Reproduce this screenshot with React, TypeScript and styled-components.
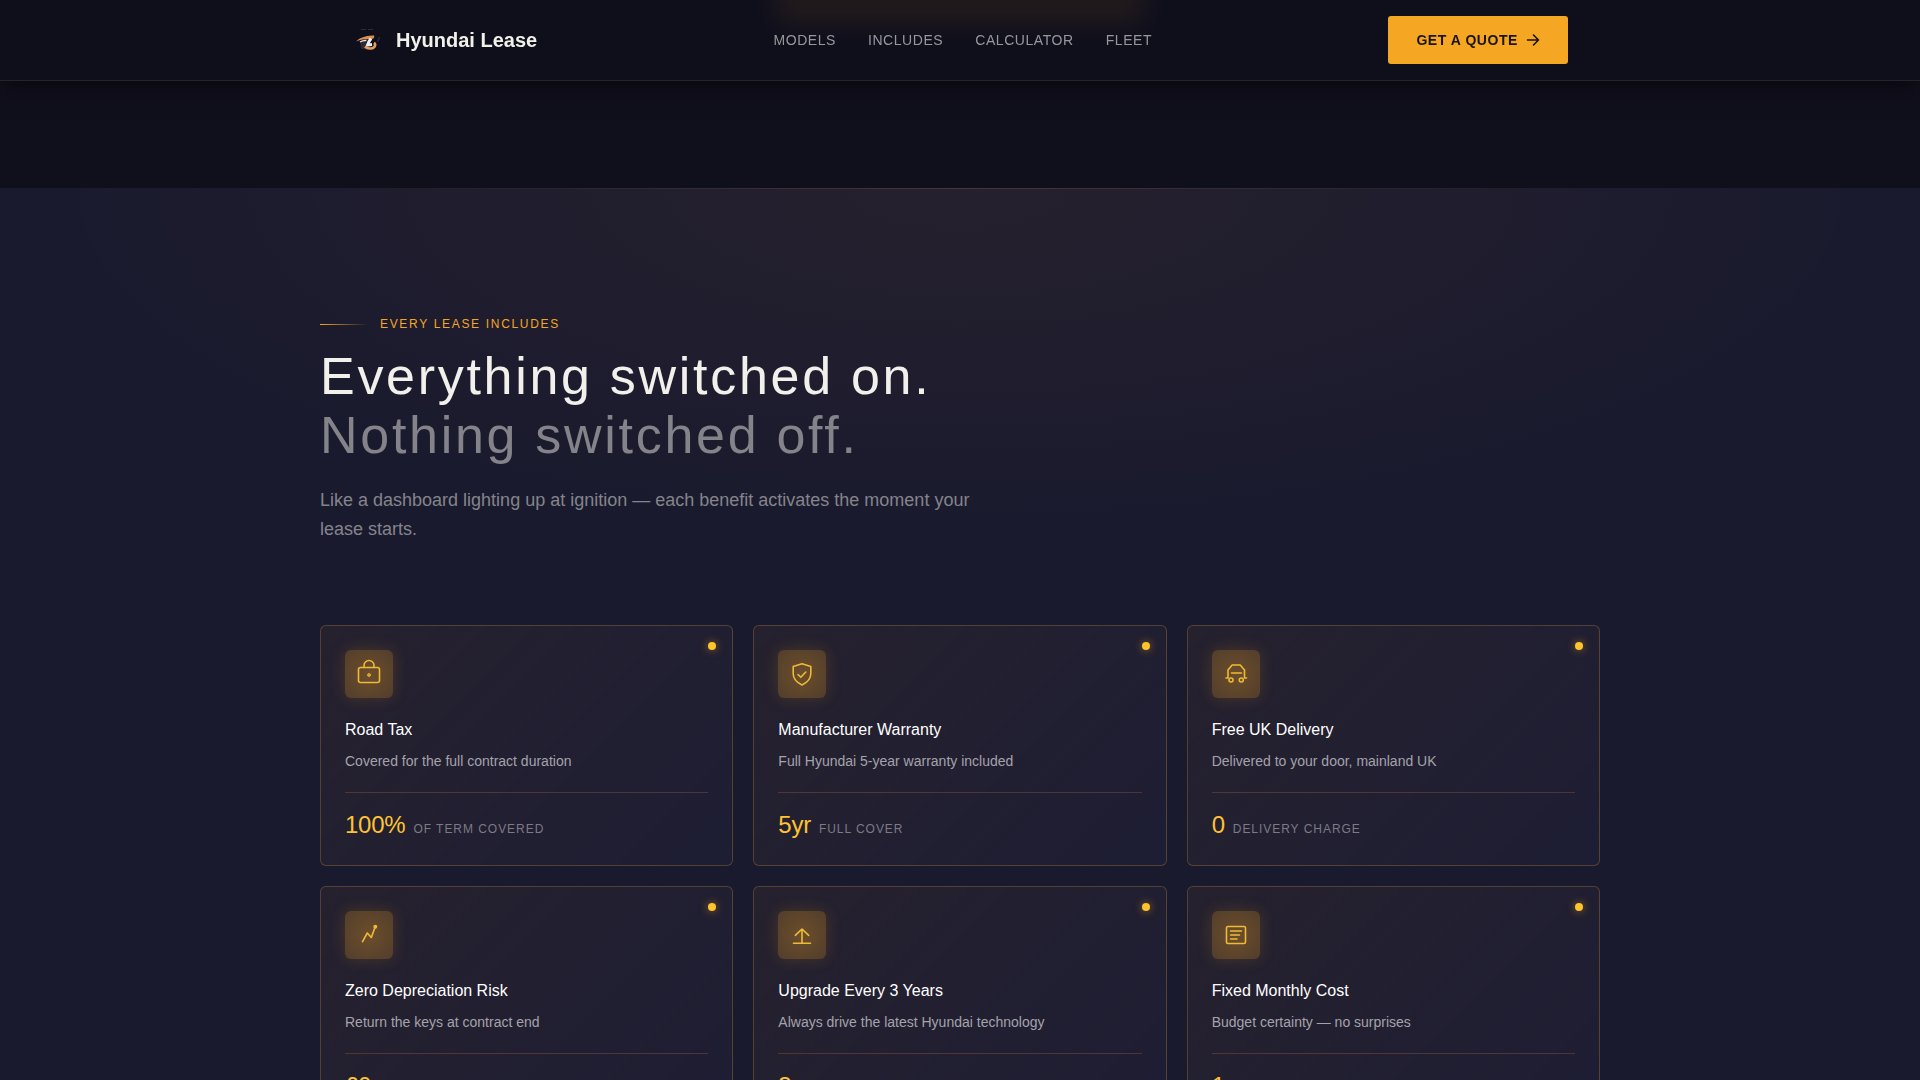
import React from "react";
import styled, { createGlobalStyle } from "styled-components";

const GlobalStyle = createGlobalStyle`
  *, *::before, *::after { box-sizing: border-box; }
  html { background: #1a1a2e; }
  body {
    margin: 0;
    height: 100vh;
    overflow: hidden;
    background: #1a1a2e;
    color: #f2f0eb;
    font-family: "Liberation Sans", Arial, sans-serif;
    -webkit-font-smoothing: antialiased;
  }
  h1, h2, h3, p, ul { margin: 0; padding: 0; }
`;

const Header = styled.header`
  position: sticky;
  top: 0;
  z-index: 10;
  border-bottom: 1px solid #24232e;
  background: #0f0f1c;
  box-shadow: 0 4px 24px rgba(0, 0, 0, 0.5);
`;

const HeaderGlow = styled.div`
  position: absolute;
  inset: 0;
  overflow: hidden;
  pointer-events: none;

  &::before {
    content: "";
    position: absolute;
    top: -40px;
    left: 50%;
    width: 368px;
    height: 64px;
    margin-left: -184px;
    background: rgba(245, 150, 35, 0.08);
    filter: blur(12px);
  }
`;

const HeaderInner = styled.div`
  position: relative;
  display: flex;
  align-items: center;
  justify-content: space-between;
  max-width: 1280px;
  margin: 0 auto;
  padding: 16px 32px;
`;

const Brand = styled.a`
  display: flex;
  align-items: center;
  gap: 12px;
  color: #f2f0eb;
  font-size: 20px;
  font-weight: 700;
  line-height: 28px;
  text-decoration: none;
`;

const Nav = styled.nav`
  display: flex;
  gap: 32px;
`;

const NavLink = styled.a`
  color: #98979b;
  font-size: 14px;
  line-height: 20px;
  letter-spacing: 0.04em;
  text-transform: uppercase;
  text-decoration: none;
`;

const QuoteButton = styled.button`
  display: flex;
  align-items: center;
  gap: 8px;
  height: 48px;
  padding: 0 28px;
  border: 0;
  border-radius: 3px;
  background: #f5a623;
  color: #1a1408;
  font: 700 14px/20px "Liberation Sans", Arial, sans-serif;
  letter-spacing: 0.04em;
  text-transform: uppercase;
  cursor: pointer;
`;

const HeroTail = styled.div`
  height: 107px;
  background: #100f1c;
`;

const Section = styled.section`
  padding: 128px 32px;
  background:
    linear-gradient(90deg, transparent 20%, rgba(245, 166, 100, 0.16) 50%, transparent 80%) top / 100% 1px no-repeat,
    radial-gradient(ellipse 48% 340px at 50% 0, rgba(245, 150, 35, 0.05), transparent),
    #1a1a2e;
`;

const Container = styled.div`
  max-width: 1280px;
  margin: 0 auto;
`;

const Eyebrow = styled.p`
  display: flex;
  align-items: center;
  gap: 12px;
  color: #f5a623;
  font-size: 12px;
  line-height: 16px;
  letter-spacing: 0.14em;
  text-transform: uppercase;

  &::before {
    content: "";
    width: 48px;
    height: 1px;
    background: linear-gradient(90deg, #f5a623, transparent);
  }
`;

const Heading = styled.h2`
  margin-top: 15px;
  font-size: 52px;
  font-weight: 400;
  line-height: 59px;
  letter-spacing: 0.052em;
`;

const Muted = styled.span`
  display: block;
  color: #838389;
`;

const Lead = styled.p`
  max-width: 672px;
  margin-top: 21px;
  color: #84848b;
  font-size: 18px;
  line-height: 29px;
`;

const Grid = styled.ul`
  display: grid;
  grid-template-columns: repeat(3, 1fr);
  gap: 20px;
  margin-top: 81px;
  list-style: none;
`;

const Card = styled.li`
  position: relative;
  padding: 24px;
  border: 1px solid rgba(245, 166, 60, 0.25);
  border-radius: 6px;
  background: linear-gradient(135deg, rgba(245, 160, 50, 0.055), rgba(32, 32, 56, 0.6));
`;

const StatusDot = styled.span`
  position: absolute;
  top: 16px;
  right: 16px;
  width: 8px;
  height: 8px;
  border-radius: 50%;
  background: #ffc32b;
  box-shadow: 0 0 8px rgba(245, 166, 35, 0.6);
`;

const IconTile = styled.div`
  display: grid;
  place-items: center;
  width: 48px;
  height: 48px;
  margin-bottom: 20px;
  border-radius: 6px;
  background: radial-gradient(circle, rgba(245, 166, 35, 0.34), rgba(245, 166, 35, 0.22));
  box-shadow: 0 0 16px rgba(245, 166, 35, 0.18);
  color: #efba35;
`;

const CardTitle = styled.h3`
  color: #fff;
  font-size: 16px;
  font-weight: 400;
  line-height: 24px;
`;

const CardText = styled.p`
  margin-top: 8px;
  color: #a4a3ab;
  font-size: 14px;
  line-height: 22px;
`;

const Stat = styled.p`
  display: flex;
  align-items: baseline;
  gap: 8px;
  margin-top: 20px;
  padding-top: 16px;
  border-top: 1px solid rgba(225, 120, 60, 0.26);
`;

const StatValue = styled.span`
  color: #ffc233;
  font-size: 24px;
  line-height: 32px;
  letter-spacing: -0.01em;
`;

const StatLabel = styled.span`
  color: #7c7b85;
  font-size: 12px;
  line-height: 16px;
  letter-spacing: 0.08em;
  text-transform: uppercase;
`;

const CardIcon = styled.svg`
  overflow: visible;
`;

const Logo = () => (
  <svg width="32" height="32" viewBox="0 0 32 32" aria-hidden="true">
    <path d="M9 5.500h5M16 5.500h5" stroke="#2c2c38" strokeWidth="1" />
    <path d="M8 17l6 .5v8l-5-1z" fill="#2b2b35" />
    <path d="M4 17.500C7 14.500 13 11.200 22 11.500c.8 1.500 0 3-2.200 3.600-4.800-.4-10.300.2-15.800 2.400z" fill="#dc8f4c" />
    <path d="M8 18c2-1.300 4-1.700 6.500-1.500" stroke="#e8e0d8" strokeWidth="1.400" fill="none" />
    <path d="M19 14.500c-1.500 2-3 4-3.500 6.500l4.500-.4" stroke="#f0edf0" strokeWidth="3" fill="none" />
    <path d="M13 22.500c2.500 2.500 7 2.900 9.500.3 1-1.800.6-3.300-.5-4" stroke="#e3a05c" strokeWidth="2.600" fill="none" />
    <path d="M27.500 13l-2 5" stroke="#2f303c" strokeWidth="1.200" />
  </svg>
);

const Arrow = () => (
  <svg width="14" height="14" viewBox="0 0 14 14" fill="none" stroke="currentColor" strokeWidth="1.600" strokeLinecap="round" strokeLinejoin="round" aria-hidden="true">
    <path d="M1.500 7h11M7.500 2l5 5-5 5" />
  </svg>
);

const icons: Record<string, React.ReactNode> = {
  lock: (
    <>
      <rect x="1.500" y="5.500" width="21" height="15" rx="2" />
      <path d="M7 5.500V3.500a5 5 0 0 1 10 0v2" />
      <circle cx="12" cy="13" r="1.500" fill="currentColor" strokeWidth="1" opacity=".8" />
    </>
  ),
  shield: (
    <>
      <path d="M12 1.800L3.200 4.500v7.300c0 5 3.800 8.800 8.800 11.200 5-2.400 8.800-6.200 8.800-11.200V4.500z" />
      <path d="M8 12.500l2.800 2.800 5-5.300" />
    </>
  ),
  car: (
    <>
      <path d="M2 16h2V8L8.200 3h8L20.500 8v8h2" />
      <path d="M7.500 11h10" />
      <circle cx="7" cy="18" r="2" />
      <circle cx="17.300" cy="18" r="2" />
    </>
  ),
  trend: (
    <>
      <path d="M5.500 18.700L10.300 10l4 4.500L18.300 3.500" />
      <circle cx="18.300" cy="3.800" r="1.200" fill="currentColor" />
    </>
  ),
  upload: <path d="M12 19.500V6M5.300 12.300L12 6l6.700 6.300M3.500 20.300h17" />,
  bill: (
    <>
      <rect x="2.500" y="3.500" width="19" height="17" rx="1.500" />
      <path d="M6.500 8h11M6.500 12h9M6.500 16h6.500" />
    </>
  ),
};

const benefits = [
  { icon: "lock", title: "Road Tax", text: "Covered for the full contract duration", value: "100%", label: "of term covered" },
  { icon: "shield", title: "Manufacturer Warranty", text: "Full Hyundai 5-year warranty included", value: "5yr", label: "full cover" },
  { icon: "car", title: "Free UK Delivery", text: "Delivered to your door, mainland UK", value: "0", label: "delivery charge" },
  { icon: "trend", title: "Zero Depreciation Risk", text: "Return the keys at contract end", value: "£0", label: "" },
  { icon: "upload", title: "Upgrade Every 3 Years", text: "Always drive the latest Hyundai technology", value: "3yr", label: "" },
  { icon: "bill", title: "Fixed Monthly Cost", text: "Budget certainty — no surprises", value: "1", label: "" },
];

const links = ["Models", "Includes", "Calculator", "Fleet"];

export default function App() {
  return (
    <>
      <GlobalStyle />
      <Header>
        <HeaderGlow />
        <HeaderInner>
          <Brand href="#top">
            <Logo />
            Hyundai Lease
          </Brand>
          <Nav aria-label="Main">
            {links.map((name) => (
              <NavLink key={name} href={`#${name.toLowerCase()}`}>{name}</NavLink>
            ))}
          </Nav>
          <QuoteButton type="button">
            Get a quote
            <Arrow />
          </QuoteButton>
        </HeaderInner>
      </Header>
      <main>
        <HeroTail />
        <Section id="includes">
          <Container>
            <Eyebrow>Every lease includes</Eyebrow>
            <Heading>
              Everything switched on.
              <Muted>Nothing switched off.</Muted>
            </Heading>
            <Lead>
              Like a dashboard lighting up at ignition — each benefit activates the moment your lease starts.
            </Lead>
            <Grid>
              {benefits.map((b) => (
                <Card key={b.title}>
                  <StatusDot />
                  <IconTile>
                    <CardIcon width="24" height="24" viewBox="0 0 24 24" fill="none" stroke="currentColor" strokeWidth="1.600" strokeLinecap="round" strokeLinejoin="round" aria-hidden="true">
                      {icons[b.icon]}
                    </CardIcon>
                  </IconTile>
                  <CardTitle>{b.title}</CardTitle>
                  <CardText>{b.text}</CardText>
                  <Stat>
                    <StatValue>{b.value}</StatValue>
                    {b.label && <StatLabel>{b.label}</StatLabel>}
                  </Stat>
                </Card>
              ))}
            </Grid>
          </Container>
        </Section>
      </main>
    </>
  );
}
